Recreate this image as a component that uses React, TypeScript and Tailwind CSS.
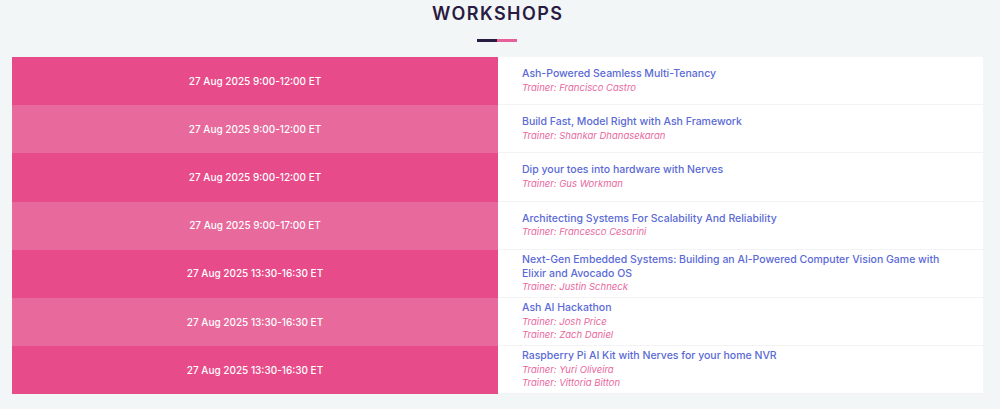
import React from 'react';

type Workshop = {
  time: string;
  title: string;
  trainers: string[];
};

const workshops: Workshop[] = [
  { time: '27 Aug 2025 9:00-12:00 ET', title: 'Ash-Powered Seamless Multi-Tenancy', trainers: ['Francisco Castro'] },
  { time: '27 Aug 2025 9:00-12:00 ET', title: 'Build Fast, Model Right with Ash Framework', trainers: ['Shankar Dhanasekaran'] },
  { time: '27 Aug 2025 9:00-12:00 ET', title: 'Dip your toes into hardware with Nerves', trainers: ['Gus Workman'] },
  { time: '27 Aug 2025 9:00-17:00 ET', title: 'Architecting Systems For Scalability And Reliability', trainers: ['Francesco Cesarini'] },
  {
    time: '27 Aug 2025 13:30-16:30 ET',
    title: 'Next-Gen Embedded Systems: Building an AI-Powered Computer Vision Game with Elixir and Avocado OS',
    trainers: ['Justin Schneck'],
  },
  { time: '27 Aug 2025 13:30-16:30 ET', title: 'Ash AI Hackathon', trainers: ['Josh Price', 'Zach Daniel'] },
  { time: '27 Aug 2025 13:30-16:30 ET', title: 'Raspberry Pi AI Kit with Nerves for your home NVR', trainers: ['Yuri Oliveira', 'Vittoria Bitton'] },
];

const App: React.FC = () => {
  return (
    <div className="min-h-[409px] bg-[#f3f6f7] font-['Inter','Liberation_Sans',sans-serif]">
      <div className="flex flex-col items-center pt-[3px] pr-[6px]">
        <h2 className="text-[18px] leading-[22px] font-semibold tracking-[0.08em] text-[#2a1b42] pl-[0.08em]">WORKSHOPS</h2>
        <div className="mt-[14px] flex h-[3px] w-[40px]">
          <div className="w-1/2 bg-[#2a1b42]" />
          <div className="w-1/2 bg-[#e8609a]" />
        </div>
      </div>

      <div className="ml-[12px] mt-[15px] w-[971px]">
        {workshops.map((w, i) => (
          <div key={i} className="grid h-[48.2px] grid-cols-[486px_1fr]">
            <div
              className={
                'flex items-center justify-center text-[10px] font-medium text-white ' +
                (i % 2 === 0 ? 'bg-[#e84b89]' : 'bg-[#e8699b]')
              }
            >
              {w.time}
            </div>
            <div className="flex flex-col justify-center border-b border-[#f3f3f5] bg-white pl-[24px] pr-[20px]">
              <div className="text-[10.5px] leading-[13.5px] font-medium text-[#5a6ad6]">{w.title}</div>
              {w.trainers.map((t) => (
                <div key={t} className="text-[9.5px] leading-[13.5px] italic text-[#e8669d]">
                  Trainer: {t}
                </div>
              ))}
            </div>
          </div>
        ))}
      </div>
    </div>
  );
};

export default App;
